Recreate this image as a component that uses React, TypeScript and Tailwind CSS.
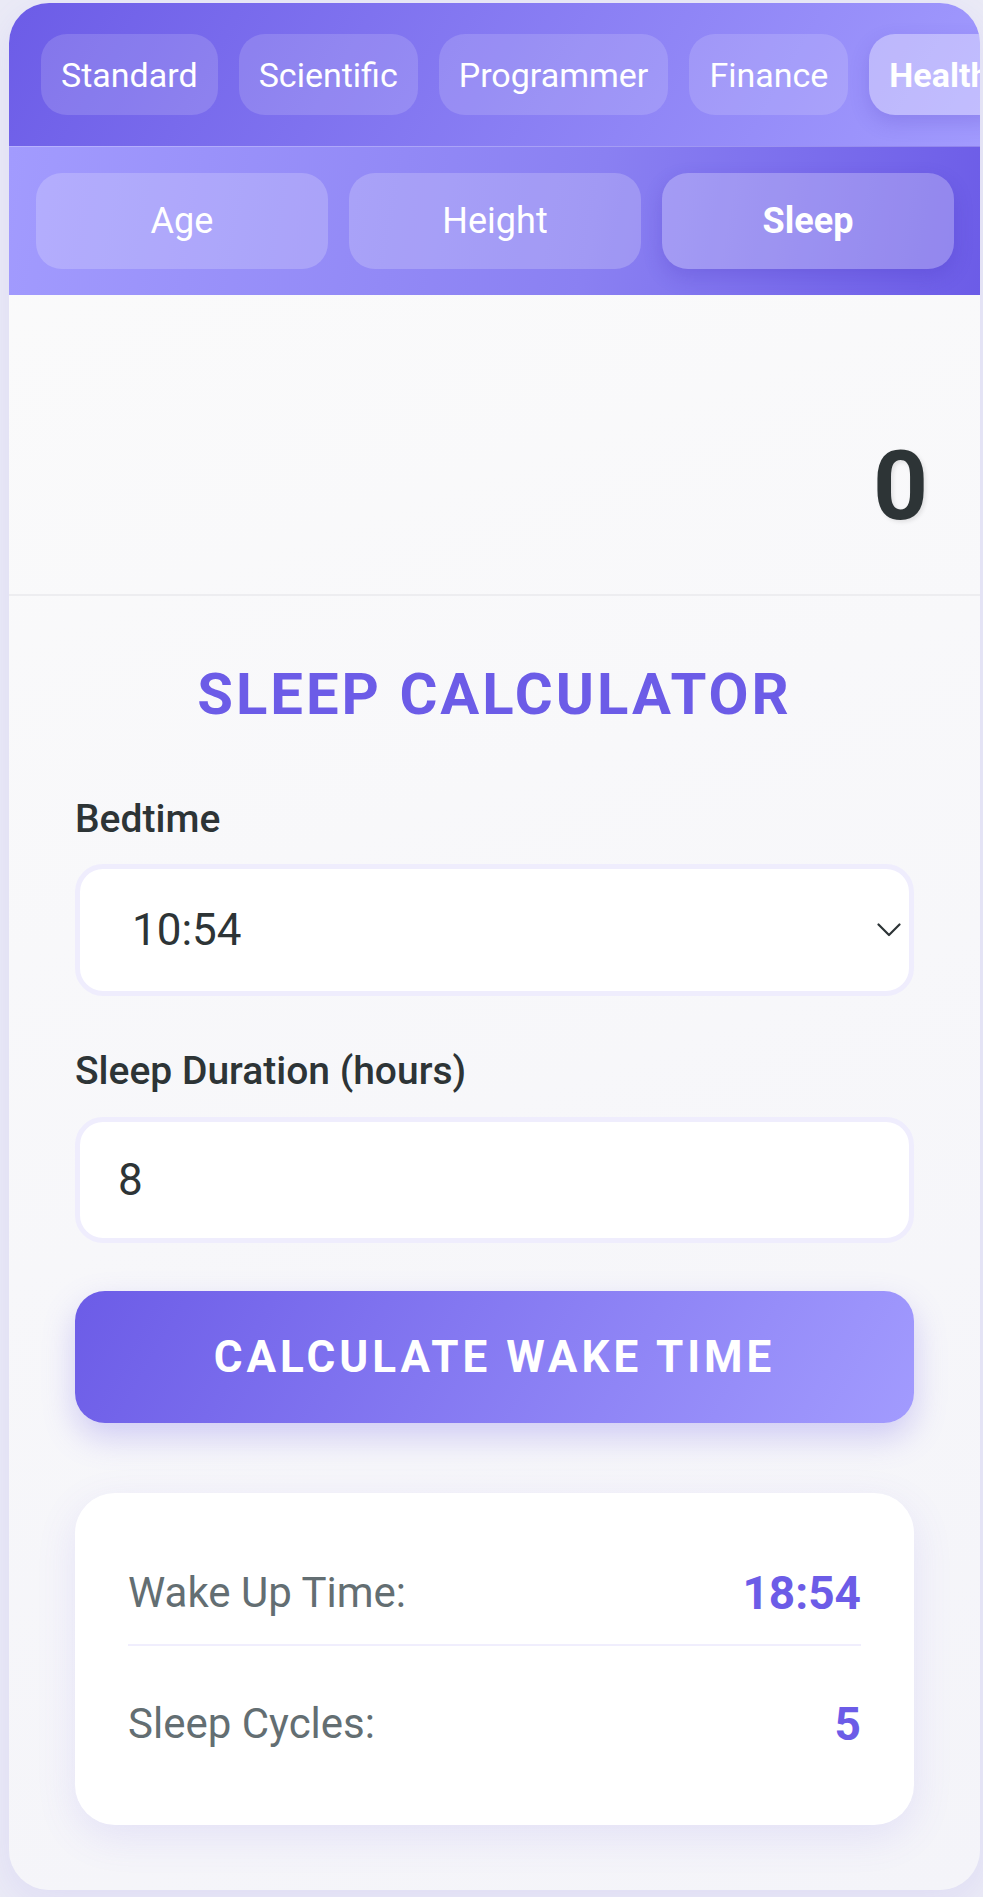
import React from "react";

function Chevron() {
  return (
    <svg width="24" height="14" viewBox="0 0 24 14" fill="none" className="shrink-0">
      <path d="M1.5 1.5 L12 12 L22.5 1.5" stroke="#2d3436" strokeWidth="2.2" strokeLinecap="round" strokeLinejoin="round" />
    </svg>
  );
}

export default function App() {
  const modes = ["Standard", "Scientific", "Programmer", "Finance"];
  return (
    <div className="min-h-[1897px] bg-[#ebebf6] pl-[9px] pr-[3px] pt-[3px] pb-[7px] font-[Roboto,sans-serif]">
      <div className="rounded-[40px] overflow-hidden bg-[linear-gradient(160deg,#fbfbfb,#f4f4f9)] shadow-[0_10px_40px_rgba(108,92,231,0.10)]">
        {/* Top mode nav */}
        <div className="h-[143px] flex items-center gap-[21px] pl-[32px] overflow-hidden bg-[linear-gradient(120deg,#6c5ce7,#a29bfe)]">
          {modes.map((m) => (
            <div
              key={m}
              className="h-[81px] px-[20px] shrink-0 flex items-center rounded-[26px] bg-white/15 text-white text-[34px] leading-none"
            >
              {m}
            </div>
          ))}
          <div className="h-[81px] px-[20px] shrink-0 flex items-center rounded-[26px] bg-white/35 text-white text-[34px] leading-none font-bold shadow-[0_8px_20px_rgba(60,40,180,0.18)]">
            Health
          </div>
        </div>
        {/* Sub nav */}
        <div className="h-[149px] border-t border-white/25 grid grid-cols-3 gap-[21px] pl-[27px] pr-[26px] pt-[26px] pb-[26px] bg-[linear-gradient(100deg,#a29bfe,#8a80f2_60%,#6c5ce7)]">
          <div className="rounded-[26px] bg-white/20 flex items-center justify-center text-white text-[36px] leading-none">
            Age
          </div>
          <div className="rounded-[26px] bg-white/20 flex items-center justify-center text-white text-[36px] leading-none">
            Height
          </div>
          <div className="rounded-[26px] bg-white/25 flex items-center justify-center text-white text-[36px] leading-none font-bold shadow-[0_8px_20px_rgba(60,40,180,0.2)]">
            Sleep
          </div>
        </div>
        {/* Display */}
        <div className="h-[301px] flex items-end justify-end pr-[52px] pb-[60px] border-b-2 border-[#ededf0]">
          <div className="text-[96px] leading-none font-bold text-[#2d3436] [text-shadow:2px_2px_4px_rgba(0,0,0,0.1)]">
            0
          </div>
        </div>
        {/* Form */}
        <div className="px-[66px] pt-[69px] pb-[65px]">
          <h2 className="text-[58px] leading-none font-bold text-center text-[#6c5ce7] tracking-[3px]">
            SLEEP CALCULATOR
          </h2>
          <div className="mt-[77px] text-[39px] leading-none font-medium text-[#2d3436]">Bedtime</div>
          <div className="mt-[25px] h-[132px] border-[5px] border-[#efedfd] rounded-[28px] bg-white flex items-center justify-between pl-[52px] pr-[8px]">
            <span className="text-[44px] leading-none text-[#2d3436]">10:54</span>
            <Chevron />
          </div>
          <div className="mt-[56px] text-[39px] leading-none font-medium text-[#2d3436]">Sleep Duration (hours)</div>
          <div className="mt-[26px] h-[126px] border-[5px] border-[#efedfd] rounded-[28px] bg-white flex items-center pl-[38px]">
            <span className="text-[44px] leading-none text-[#2d3436]">8</span>
          </div>
          <div className="mt-[48px] h-[132px] rounded-[30px] bg-[linear-gradient(120deg,#6c5ce7,#a29bfe)] flex items-center justify-center shadow-[0_14px_32px_rgba(108,92,231,0.28)]">
            <span className="text-[44px] leading-none font-bold text-white tracking-[4px]">CALCULATE WAKE TIME</span>
          </div>
          <div className="mt-[70px] rounded-[40px] bg-white px-[53px] pt-[68px] pb-[69px] shadow-[0_12px_40px_rgba(108,92,231,0.12)]">
            <div className="flex items-center justify-between pb-[19px] border-b-2 border-[#f0eefd]">
              <span className="text-[42px] leading-[64px] text-[#636e72]">Wake Up Time:</span>
              <span className="text-[46px] leading-[64px] font-bold text-[#6c5ce7]">18:54</span>
            </div>
            <div className="flex items-center justify-between pt-[46px]">
              <span className="text-[42px] leading-[64px] text-[#636e72]">Sleep Cycles:</span>
              <span className="text-[46px] leading-[64px] font-bold text-[#6c5ce7]">5</span>
            </div>
          </div>
        </div>
      </div>
    </div>
  );
}
